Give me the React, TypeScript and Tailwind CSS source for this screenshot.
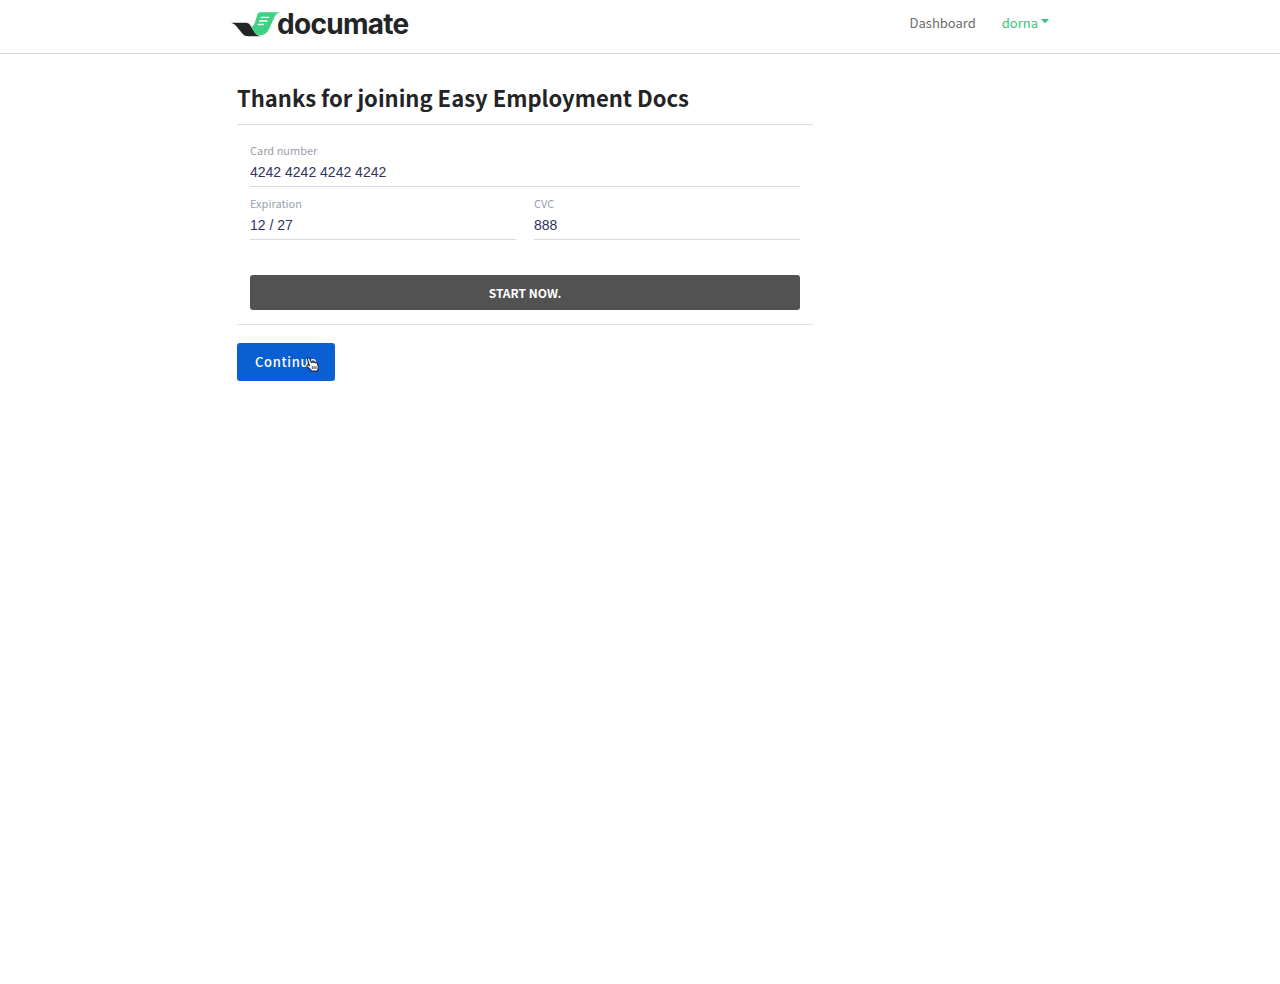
import { useState } from "react";

type FieldProps = {
  id: string;
  label: string;
  initial: string;
};

function Field({ id, label, initial }: FieldProps) {
  const [value, setValue] = useState(initial);
  return (
    <div className="flex flex-1 flex-col border-b border-[#d9d9de]">
      <label htmlFor={id} className="text-[11px] leading-4 text-[#999fac]">
        {label}
      </label>
      <input
        id={id}
        value={value}
        onChange={(e) => setValue(e.target.value)}
        className="h-7 w-full min-w-0 bg-transparent font-['Liberation_Sans',Arial,sans-serif] text-[14px] leading-5 text-[#32325d] outline-none"
      />
    </div>
  );
}

function Logo() {
  return (
    <a href="#" className="flex items-center text-[#232425]">
      <svg viewBox="0 0 48 24" className="h-[25px] w-[50px]" aria-hidden="true">
        <path
          d="M0 10.4H14.2C16.6 10.4 17.4 11.4 18.6 13L22 18.4C23.4 20.8 25 22.8 28.4 23.2H16.8C13.6 23.2 12 22 10.2 19.8L6 14.6C4.4 12.6 2.8 11 0 10.4Z"
          fill="#232425"
        />
        <path
          d="M27.8 0.2H47.6C44.8 0.6 43.2 2 41.8 4.6L36.8 15.8C34.8 20 32.4 22.2 28.2 22.2C25 22.2 23.2 20.6 21.4 17.6L19 13.8C21.4 14.2 22 12.8 22.6 11L24.6 4.8C25.4 1.8 26 0.4 27.8 0.2Z"
          fill="#3fd283"
        />
        <path
          d="M28.6 5.2H36.6M27 8.6H35M25.6 12H31.6"
          stroke="#fff"
          strokeWidth="1.3"
          fill="none"
        />
      </svg>
      <span className="-ml-1 font-['Inter',sans-serif] text-[28px] leading-8 font-bold tracking-tight">
        documate
      </span>
    </a>
  );
}

function HandCursor() {
  return (
    <svg
      viewBox="0 0 12 14"
      className="pointer-events-none absolute right-4 bottom-[9px] h-[15px] w-[13px]"
      aria-hidden="true"
    >
      <path
        d="M3.2 8.2L1.4 2.2C1 0.6 2.8 0.2 3.4 1.6L4.9 5.2C5.3 4.4 6.4 4.4 6.9 5.2C7.5 4.5 8.4 4.7 8.8 5.5C9.6 5 10.5 5.5 10.8 6.4L11.3 9C11.5 10.6 10.9 11.4 10.6 13.2H5.2C4.6 11.8 2.6 10.4 1 8.9C0.2 7.8 1.6 7 2.4 7.6Z"
        fill="#fff"
        stroke="#1b2430"
        strokeWidth="1"
        strokeLinejoin="round"
      />
      <path
        d="M5.8 8.6V11.2M7.5 8.6V11.2M9.2 8.6V11.2"
        stroke="#1b2430"
        strokeWidth="0.8"
      />
    </svg>
  );
}

export default function App() {
  return (
    <div className="min-h-screen bg-white font-['Noto_Sans_CJK_SC',sans-serif] text-[#212529]">
      <header className="border-b border-[#d6d6d6]">
        <div className="mx-auto flex h-[53px] max-w-[818px] items-start justify-between pt-2">
          <Logo />
          <nav className="flex items-center gap-[26px] pt-[5px] text-[13px] leading-5">
            <a href="#" className="text-[#6c6c6c]">
              Dashboard
            </a>
            <button type="button" className="flex items-center gap-[3px] text-[#3cc47c]">
              dorna
              <svg viewBox="0 0 8 5" className="mb-1 h-[5px] w-2" aria-hidden="true">
                <path d="M0 0H8L4 4.6Z" fill="currentColor" />
              </svg>
            </button>
          </nav>
        </div>
      </header>

      <main className="mx-auto max-w-[806px] pt-[26px]">
        <div className="max-w-[576px]">
          <h1 className="border-b border-[#dcdcdc] pb-2.5 text-[22px] leading-[34px] font-bold text-[#232425]">
            Thanks for joining Easy Employment Docs
          </h1>
          <form
            className="flex flex-col border-b border-[#e2e2e2] px-[13px] pt-[17px] pb-[14px]"
            onSubmit={(e) => e.preventDefault()}
          >
            <Field id="card" label="Card number" initial="4242 4242 4242 4242" />
            <div className="flex gap-[18px] pt-2">
              <Field id="expiration" label="Expiration" initial="12 / 27" />
              <Field id="cvc" label="CVC" initial="888" />
            </div>
            <button
              type="submit"
              className="mt-[35px] h-[35px] rounded-[3px] bg-[#525252] text-[12px] leading-5 font-bold text-white"
            >
              START NOW.
            </button>
          </form>
          <button
            type="button"
            className="relative mt-[18px] h-[38px] rounded-[3px] bg-[#0a5fd3] px-[18px] text-[13px] leading-5 font-medium tracking-wider text-white"
          >
            Continue
            <HandCursor />
          </button>
        </div>
      </main>
    </div>
  );
}
